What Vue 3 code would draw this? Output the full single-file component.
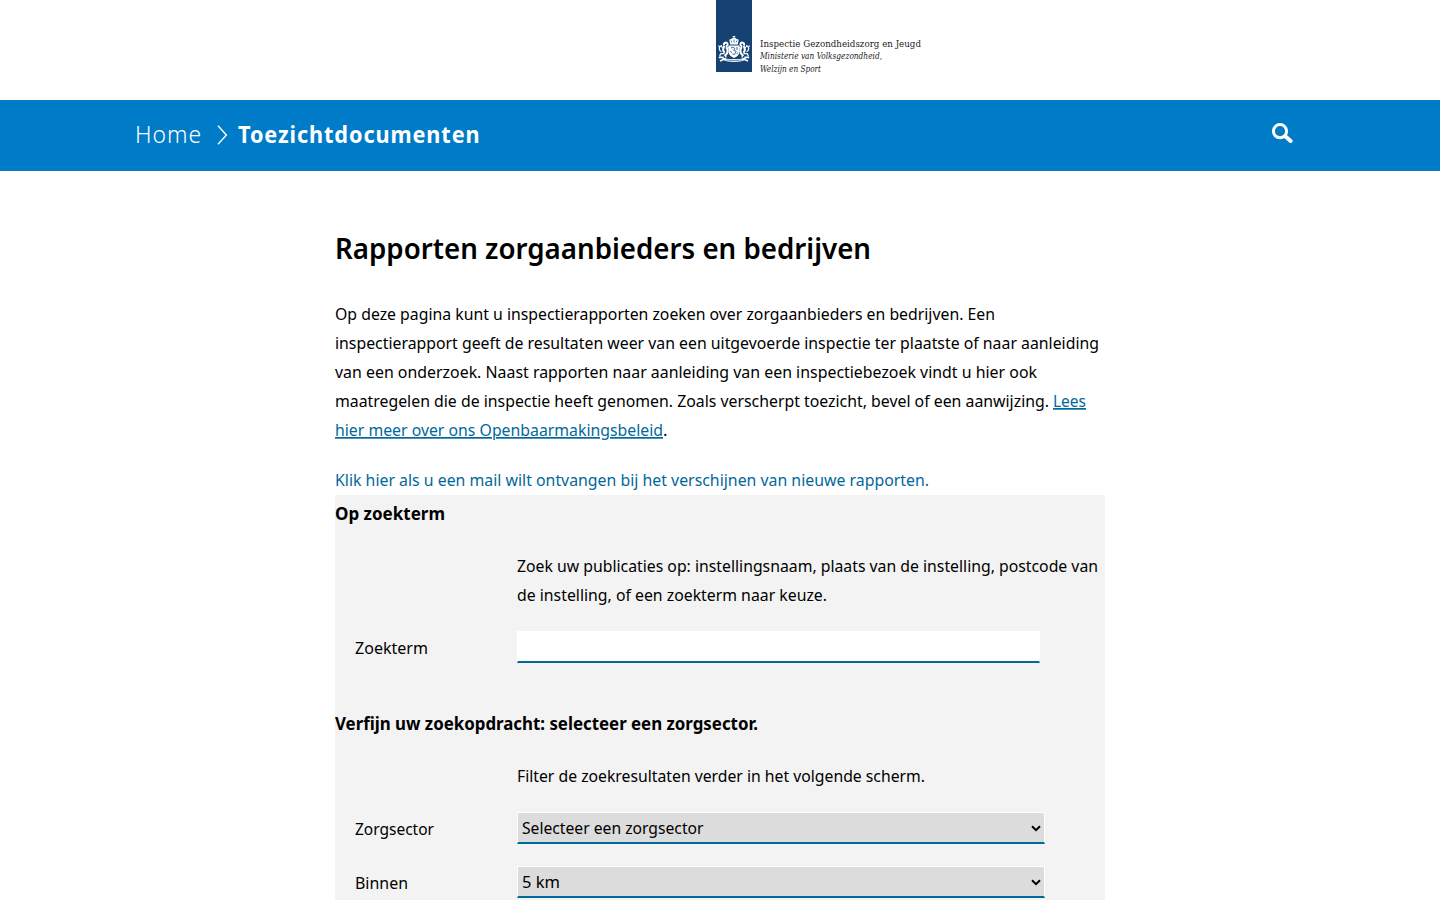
<script setup>
import { h } from 'vue'

// One line of real text, fitted to a fixed measure. b = baseline, lh = line height.
const Line = (p) =>
  h('svg', { class: 'line', width: p.w, height: p.lh || 29, overflow: 'visible' }, [
    h('text', { x: 0, y: p.b || 20, textLength: p.w, lengthAdjust: 'spacingAndGlyphs' }, p.t),
  ])
Line.props = ['w', 't', 'b', 'lh']

const intro = [
  { t: 'Op deze pagina kunt u inspectierapporten zoeken over zorgaanbieders en bedrijven. Een', w: 660 },
  { t: 'inspectierapport geeft de resultaten weer van een uitgevoerde inspectie ter plaatste of naar aanleiding', w: 764 },
  { t: 'van een onderzoek. Naast rapporten naar aanleiding van een inspectiebezoek vindt u hier ook', w: 702 },
]
const selects = [
  { label: 'Zorgsector', lw: 79, value: 'Selecteer een zorgsector', vw: 181.5 },
  { label: 'Binnen', lw: 53, value: '5 km', vw: 38 },
]
</script>

<template>
  <div class="page">
    <header class="logo">
      <div class="ribbon">
        <svg class="arms" width="32" height="28" viewBox="0 0 32 28" fill="#fff">
          <path d="M11.5 5.2q-.6-2.4 1.8-2.3 1-1 2.1-.8V1h-.8V.3h.8V0h1.2v.3h.8V1h-.8v1.1q1.1-.2 2.1.8 2.4-.1 1.8 2.3l-.7 3.3h-7.6z" />
          <path d="M13 4.5l1 2M16 3.5v3M19 4.5l-1 2" stroke="#154273" stroke-width=".7" />
          <path d="M10.5 9.4h11v6.1q0 4.2-5.5 6.4-5.5-2.2-5.5-6.4z" />
          <path d="M13 12l2-1 2 1.6-1.4 1.6 2.6 1.2-1.8 3.2-2-.8M19 11v3M12.2 15.5l1.8 1M18.8 18l1-1.5" fill="none" stroke="#154273" stroke-width=".8" />
          <g v-for="m in ['', 'translate(32 0) scale(-1 1)']" :key="m" :transform="m" fill="none" stroke="#fff">
            <path d="M6.2 9.2q-1-2 1.4-2.6 2.2 0 2 2-.3 1.4-1.8 1.8M6.5 9.8q-2.8 4.4.2 6.8M8.2 11q2.2 3 1 6.2L6.6 20" stroke-width="2" />
            <path d="M6 12.6L3.2 10.4M9 12.8l2-1.6M6.5 17.4l-4 .4-.8 2.4M7.4 18.8l.7 2.8M3.4 15.8Q.6 14 1.6 11.4L.6 9.4M2.2 11l1.4-2" stroke-width="1.2" />
            <path d="M.8 21.4h4l1 2.2M2 24.9l3.8-1.6q5 .4 10.2 1.6" stroke-width="1.6" />
          </g>
          <path d="M6 21.8q4 2.2 10 1.2 6 1 10-1.2v2.4q-4 2-10 1.6-6 .4-10-1.6z" />
          <path d="M8 24q8 1 16 0" fill="none" stroke="#154273" stroke-width=".6" />
        </svg>
      </div>
      <div class="logo-text">
        <Line :w="161" :lh="12" :b="10" t="Inspectie Gezondheidszorg en Jeugd" />
        <Line class="it" :w="122" :lh="13" :b="10.3" t="Ministerie van Volksgezondheid," />
        <Line class="it" :w="61" :lh="13" :b="9.8" t="Welzijn en Sport" />
      </div>
    </header>

    <nav class="bar">
      <div class="crumbs">
        <Line class="home" :w="67" :lh="71" :b="43" t="Home" />
        <svg class="chev" width="12" height="20" viewBox="0 0 12 20"><path d="M1 .8l8.4 9.2L1 19.2" fill="none" stroke="#fff" stroke-width="1.4" /></svg>
        <Line class="current" :w="242.5" :lh="71" :b="43" t="Toezichtdocumenten" />
      </div>
      <svg class="search" width="22" height="21" viewBox="0 0 22 21" fill="none" stroke="#fff">
        <circle cx="9" cy="8.2" r="6.6" stroke-width="3" />
        <path d="M14 13l5.6 5" stroke-width="4" stroke-linecap="round" />
      </svg>
    </nav>

    <main>
      <h1><Line :w="536" :lh="42" :b="31" t="Rapporten zorgaanbieders en bedrijven" /></h1>
      <div class="intro">
        <Line v-for="l in intro" :key="l.t" :w="l.w" :t="l.t" />
        <div class="row">
          <Line :w="714" t="maatregelen die de inspectie heeft genomen. Zoals verscherpt toezicht, bevel of een aanwijzing." />
          <a class="u gap"><Line :w="33" t="Lees" /></a>
        </div>
        <div class="row">
          <a class="u"><Line :w="328" t="hier meer over ons Openbaarmakingsbeleid" /></a>
          <Line :w="4.5" t="." />
        </div>
      </div>
      <a><Line :w="594" t="Klik hier als u een mail wilt ontvangen bij het verschijnen van nieuwe rapporten." /></a>

      <form>
        <h2><Line :w="110" :lh="36" :b="25" t="Op zoekterm" /></h2>
        <div class="help">
          <Line :w="581" t="Zoek uw publicaties op: instellingsnaam, plaats van de instelling, postcode van" />
          <Line :w="310" t="de instelling, of een zoekterm naar keuze." />
        </div>
        <div class="field first">
          <label><Line :w="73" :lh="32" :b="23" t="Zoekterm" /></label>
          <input type="text" />
        </div>
        <h2 class="second"><Line :w="423" :lh="36" :b="25" t="Verfijn uw zoekopdracht: selecteer een zorgsector." /></h2>
        <div class="help"><Line :w="408" t="Filter de zoekresultaten verder in het volgende scherm." /></div>
        <div v-for="s in selects" :key="s.label" class="field">
          <label><Line :w="s.lw" :lh="32" :b="23" :t="s.label" /></label>
          <div class="select">
            <Line :w="s.vw" :lh="29" :b="21" :t="s.value" />
            <svg class="caret" width="10" height="7" viewBox="0 0 10 7"><path d="M1 1.2l4 4 4-4" fill="none" stroke="#000" stroke-width="2" /></svg>
          </div>
        </div>
      </form>
    </main>
  </div>
</template>

<style>
body { margin: 0; background: #fff; overflow: hidden; }
</style>

<style scoped>
.page { height: 900px; overflow: hidden; font: 17px "Noto Sans", sans-serif; color: #000; }
.line { display: block; flex: none; fill: currentColor; }
.logo { display: flex; height: 100px; padding-left: 716px; }
.ribbon { width: 36px; height: 72px; background: #154273; display: flex; align-items: flex-end; justify-content: center; }
.arms { margin-bottom: 8px; }
.logo-text { padding: 37px 0 0 7.5px; font: 10px "DejaVu Serif Condensed", "DejaVu Serif", serif; color: #222; }
.it { font-style: italic; }
.bar { height: 71px; background: #007bc7; color: #fff; display: flex; justify-content: space-between; padding: 0 147px 0 134.5px; font-size: 24px; letter-spacing: 1px; }
.crumbs { display: flex; align-items: center; }
.home { font-weight: 300; }
.chev { margin: 0 9px 2px 15px; }
.current { font-weight: 700; }
.search { margin-top: 23px; }
main { width: 770px; margin: 0 auto; padding-top: 57px; }
h1, h2 { margin: 0; }
h1 { font-size: 29.5px; font-weight: 650; height: 42px; margin-bottom: 30px; }
.intro { margin-bottom: 21px; }
.row { display: flex; }
a { display: block; color: #01689b; }
.u :deep(text) { text-decoration: underline; text-decoration-thickness: 1px; text-decoration-skip-ink: none; text-underline-offset: 2px; }
.gap { margin-left: 4px; }
form { background: #f3f3f3; height: 480px; }
h2 { font-size: 18px; font-weight: 700; height: 36px; }
.help { padding: 21px 0 21px 182px; }
.field { display: flex; height: 32px; padding-left: 20px; margin-bottom: 22px; }
.field.first { margin-bottom: 42px; }
label { width: 162px; flex: none; }
input { box-sizing: border-box; width: 523px; height: 32px; border: 1px solid #fff; border-bottom: 2px solid #01689b; background: #fff; padding: 0; outline: none; }
.select { box-sizing: border-box; width: 528px; height: 32px; border: 1px solid #fff; border-bottom: 2px solid #01689b; background: #dcdcdc; display: flex; align-items: center; justify-content: space-between; padding: 0 3px 0 4px; }
.caret { margin-top: 2px; }
</style>
